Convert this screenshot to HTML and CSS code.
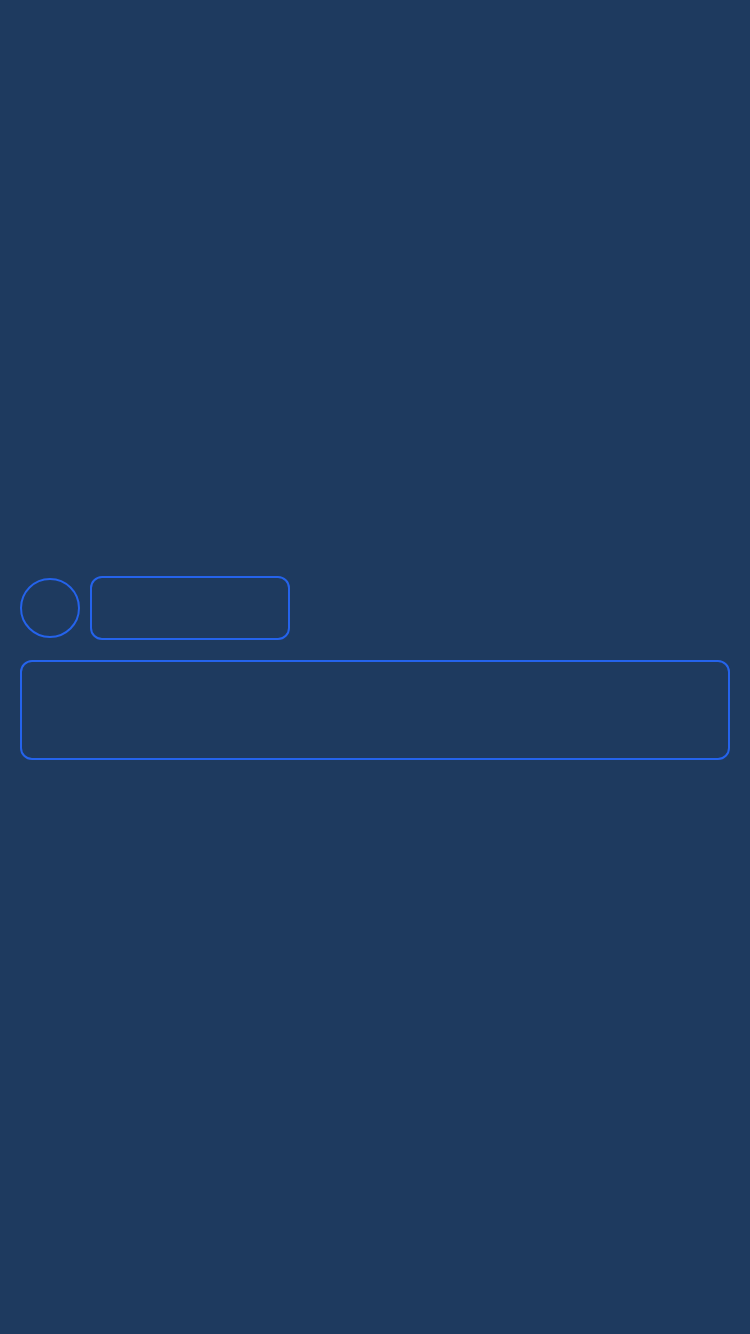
FILE: index.html
```html
<!DOCTYPE html>
<html lang="en">
<head>
<meta charset="utf-8">
<title>Skeleton</title>
<link rel="stylesheet" href="styles.css">
</head>
<body>
<main class="page">
  <div class="header-row">
    <div class="avatar"></div>
    <div class="title-box"></div>
  </div>
  <div class="content-box"></div>
</main>
</body>
</html>
```

FILE: styles.css
```css
html, body {
  margin: 0;
  padding: 0;
  background: #1e3a5f;
  font-family: "Liberation Sans", Arial, sans-serif;
}
.page {
  box-sizing: border-box;
  height: 1334px;
  padding: 2px 20px 0;
  display: flex;
  flex-direction: column;
  justify-content: center;
  gap: 20px;
}
.header-row {
  display: flex;
  align-items: center;
  gap: 10px;
}
.avatar {
  box-sizing: border-box;
  width: 60px;
  height: 60px;
  border: 2px solid #2563eb;
  border-radius: 50%;
}
.title-box {
  box-sizing: border-box;
  width: 200px;
  height: 64px;
  border: 2px solid #2563eb;
  border-radius: 12px;
}
.content-box {
  box-sizing: border-box;
  height: 100px;
  border: 2px solid #2563eb;
  border-radius: 12px;
}
```
